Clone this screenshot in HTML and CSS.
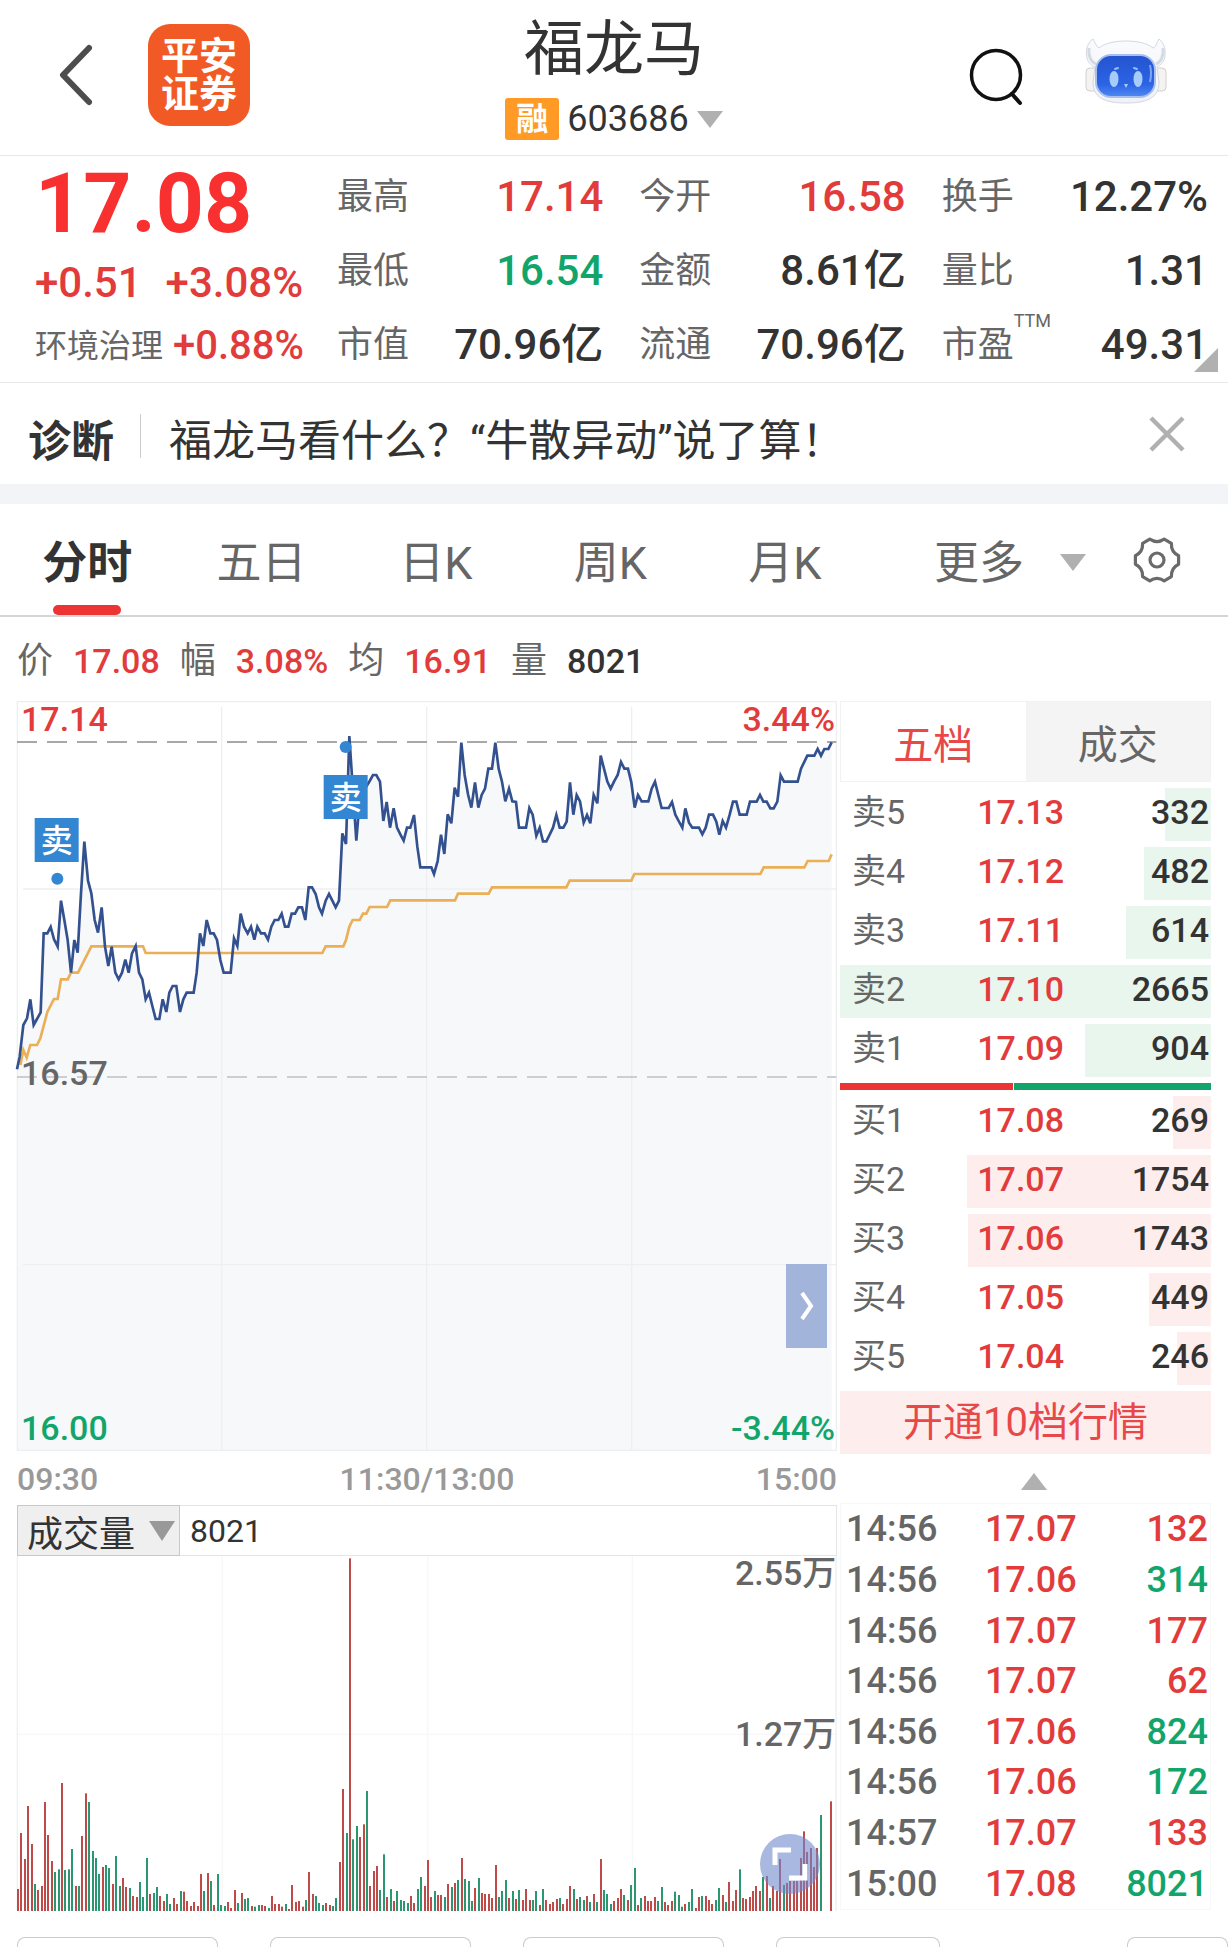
FILE: index.html
```html
<!DOCTYPE html>
<html lang="zh-CN">
<head>
<meta charset="UTF-8">
<meta name="viewport" content="width=device-width, initial-scale=1.0">
<title>福龙马 603686</title>
<link rel="stylesheet" href="styles.css">
</head>
<body>

<header class="topbar">
    <div class="topbar-side">
        <button class="icon-btn" aria-label="返回">
            <svg width="40" height="66" viewBox="0 0 40 66"><path d="M33 6 L7 33 L33 60" fill="none" stroke="#4d4d4d" stroke-width="6" stroke-linecap="round" stroke-linejoin="round"/></svg>
        </button>
        <div class="broker">平安<br>证券</div>
    </div>
    <div class="stock">
        <h1>福龙马</h1>
        <button class="stock-code"><span class="badge">融</span>603686<span class="caret"></span></button>
    </div>
    <div class="topbar-side right">
        <button class="icon-btn" aria-label="搜索">
            <svg width="54" height="58" viewBox="0 0 54 58"><circle cx="27" cy="27" r="24.5" fill="none" stroke="#111" stroke-width="3.5"/><path d="M43 46 L51 55" stroke="#111" stroke-width="4" stroke-linecap="round"/></svg>
        </button>
        <button class="icon-btn" aria-label="智能助手">
            <svg width="82" height="78" viewBox="0 0 82 78">
                <defs>
                    <linearGradient id="face" x1="0" y1="0" x2="0" y2="1">
                        <stop offset="0" stop-color="#2454cf"/>
                        <stop offset="0.7" stop-color="#2c63e6"/>
                        <stop offset="1" stop-color="#4f8af2"/>
                    </linearGradient>
                    <linearGradient id="shell" x1="0" y1="0" x2="0" y2="1">
                        <stop offset="0" stop-color="#fafbfd"/>
                        <stop offset="1" stop-color="#eef2f9"/>
                    </linearGradient>
                </defs>
                <rect x="1" y="30" width="12" height="23" rx="4" fill="#f5f2f2" stroke="#d5ced0"/>
                <rect x="69" y="30" width="12" height="23" rx="4" fill="#f5f2f2" stroke="#d5ced0"/>
                <path d="M8 1 C3 4 0 12 2 20 C3 25 7 28 10 29 L8 44 C8 60 20 65 41 65 C62 65 74 60 74 44 L72 29 C76 27 80 23 80 17 C81 10 78 4 74 1 C72 4 71 9 68 10 C62 5 52 3 41 3 C30 3 20 5 14 10 C11 8 10 4 8 1 Z" fill="url(#shell)" stroke="#d3d8e0"/>
                <path d="M4 10 C3 18 6 24 11 26 M78 10 C79 18 76 24 71 26" fill="none" stroke="#d3dae3" stroke-width="3"/>
                <rect x="11" y="17" width="59" height="42" rx="15" fill="url(#face)" stroke="#a9bfec" stroke-width="2"/>
                <ellipse cx="29" cy="41" rx="4.5" ry="8" fill="#a5cdf8"/>
                <ellipse cx="53" cy="41" rx="4.5" ry="8" fill="#a5cdf8"/>
                <path d="M30 31 L33 30 M49 30 L52 31" stroke="#8ec0f5" stroke-width="2" stroke-linecap="round"/>
                <path d="M39 46 L43 46 L41 50 Z" fill="#a5cdf8"/>
                <path d="M65 27 Q67 35 65 44" fill="none" stroke="#7fa6f4" stroke-width="2"/>
            </svg>
        </button>
    </div>
</header>

<section class="quote">
    <div class="quote-main">
        <div class="price">17.08</div>
        <div class="change"><span>+0.51</span><span>+3.08%</span></div>
        <div class="sector">环境治理 <b>+0.88%</b></div>
    </div>
    <dl class="stats">
        <div><dt>最高</dt><dd class="red">17.14</dd></div>
        <div><dt>今开</dt><dd class="red">16.58</dd></div>
        <div><dt>换手</dt><dd>12.27%</dd></div>
        <div><dt>最低</dt><dd class="green">16.54</dd></div>
        <div><dt>金额</dt><dd>8.61亿</dd></div>
        <div><dt>量比</dt><dd>1.31</dd></div>
        <div><dt>市值</dt><dd>70.96亿</dd></div>
        <div><dt>流通</dt><dd>70.96亿</dd></div>
        <div><dt>市盈<span class="ttm">TTM</span></dt><dd>49.31</dd></div>
    </dl>
</section>

<section class="diagnose">
    <strong>诊断</strong>
    <a href="#">福龙马看什么？“牛散异动”说了算！</a>
    <button class="icon-btn" aria-label="关闭">
        <svg width="40" height="40" viewBox="0 0 40 40"><path d="M4 4 L36 36 M36 4 L4 36" stroke="#b0b0b0" stroke-width="4.5"/></svg>
    </button>
</section>

<nav class="tabs">
    <button class="active">分时</button>
    <button>五日</button>
    <button>日K</button>
    <button>周K</button>
    <button>月K</button>
    <div class="tabs-more">
        <button>更多<span class="caret"></span></button>
        <button class="icon-btn" aria-label="设置">
            <svg width="48" height="48" viewBox="0 0 48 48" fill="none" stroke="#6a6a6a" stroke-width="3.2" stroke-linejoin="round">
                <path d="M45.6 28.2 Q37.9 32 38.4 40.6 L31.2 44.8 Q24 40 16.8 44.8 L9.6 40.6 Q10.1 32 2.4 28.2 L2.4 19.8 Q10.1 16 9.6 7.4 L16.8 3.2 Q24 8 31.2 3.2 L38.4 7.4 Q37.9 16 45.6 19.8 Z"/>
                <circle cx="24" cy="24" r="7"/>
            </svg>
        </button>
    </div>
</nav>

<div class="info">
    <span>价</span><b class="red">17.08</b>
    <span>幅</span><b class="red">3.08%</b>
    <span>均</span><b class="red">16.91</b>
    <span>量</span><b>8021</b>
</div>

<main class="board">
    <div class="charts">
        <div class="chart-box">
            <svg class="chart" viewBox="52 33 2460 2250">
                <polygon class="area" points="52,2283 52,1138 60,1100 71,1005 82,985 92,928 102,1005 112,987 123,967 132,730 143,730 153,711 163,748 174,770 184,632 194,690 204,750 214,848 224,750 234,788 244,610 254,455 265,572 275,610 285,690 295,728 306,652 316,770 326,828 336,770 347,848 357,868 367,848 377,809 387,848 397,790 408,768 418,848 428,868 438,928 448,908 458,948 468,987 479,987 489,928 500,966 509,908 519,888 530,888 541,966 551,928 561,908 582,908 591,848 601,730 611,768 621,690 632,730 642,730 652,750 662,810 672,848 693,848 703,745 713,768 723,671 733,710 744,730 754,710 764,749 773,710 784,730 795,730 805,749 815,710 825,690 836,690 846,671 856,710 866,710 876,671 886,671 896,652 907,652 917,690 927,592 937,592 948,612 958,652 967,671 978,632 988,612 998,632 1008,652 1018,632 1028,430 1039,462 1049,138 1059,290 1070,452 1080,330 1090,310 1100,290 1110,273 1120,255 1130,255 1141,275 1151,393 1161,336 1171,413 1182,355 1192,413 1202,433 1212,452 1222,413 1232,413 1243,375 1253,470 1262,532 1295,532 1303,552 1314,513 1324,434 1334,492 1344,373 1355,400 1365,293 1375,320 1385,158 1395,255 1405,313 1415,353 1426,277 1436,353 1446,315 1456,296 1466,236 1477,236 1487,158 1497,236 1507,275 1517,334 1528,296 1538,334 1549,336 1558,413 1579,413 1589,354 1599,374 1610,437 1620,413 1630,454 1640,454 1650,434 1660,413 1670,375 1680,413 1691,413 1701,395 1711,277 1721,374 1731,315 1741,334 1752,398 1762,375 1772,400 1782,315 1793,340 1803,197 1813,236 1823,275 1833,296 1843,275 1854,255 1864,216 1874,236 1885,236 1895,277 1905,353 1915,315 1926,334 1946,334 1956,296 1966,275 1976,315 1986,354 2007,354 2017,336 2027,374 2037,393 2048,413 2057,355 2068,398 2078,413 2098,413 2108,433 2118,413 2128,374 2140,374 2150,395 2159,434 2169,393 2179,413 2190,374 2200,335 2210,335 2220,374 2241,374 2251,335 2271,335 2281,315 2291,335 2301,335 2312,355 2322,355 2333,335 2343,256 2353,275 2394,275 2404,236 2423,197 2444,197 2454,177 2464,197 2474,177 2486,177 2496,157 2496,2283"/>
                <path class="grid" d="M666 50 V2283 M1281 50 V2283 M1896 50 V2283 M70 597 H2510 M70 1724 H2510"/>
                <rect class="frame" x="53" y="35" width="2457" height="2246"/>
                <path class="limit" d="M52 156 H2510"/>
                <path class="base" d="M52 1161 H2510"/>
                <polyline class="avg" points="62,1125 71,1080 81,1103 92,1065 112,1065 122,1045 143,966 163,927 174,927 184,868 204,868 214,848 235,848 275,769 430,769 438,789 968,789 978,769 1031,769 1039,750 1049,710 1059,690 1080,690 1090,671 1100,671 1110,651 1162,651 1172,631 1366,631 1375,611 1467,611 1477,592 1700,592 1710,572 1895,572 1904,552 2282,552 2292,532 2414,532 2424,513 2487,513 2496,493"/>
                <polyline class="line" points="52,1138 60,1100 71,1005 82,985 92,928 102,1005 112,987 123,967 132,730 143,730 153,711 163,748 174,770 184,632 194,690 204,750 214,848 224,750 234,788 244,610 254,455 265,572 275,610 285,690 295,728 306,652 316,770 326,828 336,770 347,848 357,868 367,848 377,809 387,848 397,790 408,768 418,848 428,868 438,928 448,908 458,948 468,987 479,987 489,928 500,966 509,908 519,888 530,888 541,966 551,928 561,908 582,908 591,848 601,730 611,768 621,690 632,730 642,730 652,750 662,810 672,848 693,848 703,745 713,768 723,671 733,710 744,730 754,710 764,749 773,710 784,730 795,730 805,749 815,710 825,690 836,690 846,671 856,710 866,710 876,671 886,671 896,652 907,652 917,690 927,592 937,592 948,612 958,652 967,671 978,632 988,612 998,632 1008,652 1018,632 1028,430 1039,462 1049,138 1059,290 1070,452 1080,330 1090,310 1100,290 1110,273 1120,255 1130,255 1141,275 1151,393 1161,336 1171,413 1182,355 1192,413 1202,433 1212,452 1222,413 1232,413 1243,375 1253,470 1262,532 1295,532 1303,552 1314,513 1324,434 1334,492 1344,373 1355,400 1365,293 1375,320 1385,158 1395,255 1405,313 1415,353 1426,277 1436,353 1446,315 1456,296 1466,236 1477,236 1487,158 1497,236 1507,275 1517,334 1528,296 1538,334 1549,336 1558,413 1579,413 1589,354 1599,374 1610,437 1620,413 1630,454 1640,454 1650,434 1660,413 1670,375 1680,413 1691,413 1701,395 1711,277 1721,374 1731,315 1741,334 1752,398 1762,375 1772,400 1782,315 1793,340 1803,197 1813,236 1823,275 1833,296 1843,275 1854,255 1864,216 1874,236 1885,236 1895,277 1905,353 1915,315 1926,334 1946,334 1956,296 1966,275 1976,315 1986,354 2007,354 2017,336 2027,374 2037,393 2048,413 2057,355 2068,398 2078,413 2098,413 2108,433 2118,413 2128,374 2140,374 2150,395 2159,434 2169,393 2179,413 2190,374 2200,335 2210,335 2220,374 2241,374 2251,335 2271,335 2281,315 2291,335 2301,335 2312,355 2322,355 2333,335 2343,256 2353,275 2394,275 2404,236 2423,197 2444,197 2454,177 2464,197 2474,177 2486,177 2496,157"/>
                <g class="mark">
                    <circle cx="173" cy="566" r="18"/>
                    <rect x="105" y="384" width="132" height="132"/>
                    <text x="171" y="486">卖</text>
                    <circle cx="1038" cy="171" r="18"/>
                    <rect x="972" y="255" width="132" height="132"/>
                    <text x="1038" y="357">卖</text>
                </g>
                <g class="scale">
                    <text class="red" x="64" y="123">17.14</text>
                    <text class="red end" x="2506" y="123">3.44%</text>
                    <text x="64" y="1186">16.57</text>
                    <text class="green" x="64" y="2251">16.00</text>
                    <text class="green end" x="2506" y="2251">-3.44%</text>
                </g>
            </svg>
            <button class="side-toggle" aria-label="展开">
                <svg width="16" height="30" viewBox="0 0 16 30"><path d="M3 2 L12 15 L3 28" fill="none" stroke="#fff" stroke-width="4"/></svg>
            </button>
        </div>
        <div class="times"><span>09:30</span><span>11:30/13:00</span><span>15:00</span></div>
        <div class="vol-head">
            <button>成交量<span class="caret"></span></button>
            <span>8021</span>
        </div>
        <div class="chart-box">
            <svg class="chart" viewBox="52 0 2460 1065">
                <path class="grid light" d="M668 0 V1065 M1284 0 V1065 M1898 0 V1065 M52 535 H2510"/>
                <path class="grid" d="M53 0 V1065 M2509 0 V1065"/>
                <g id="volume"></g>
                <g class="scale">
                    <text class="end" x="2510" y="87">2.55万</text>
                    <text class="end" x="2510" y="570">1.27万</text>
                </g>
            </svg>
            <button class="expand" aria-label="全屏">
                <svg width="36" height="34" viewBox="0 0 36 34"><path d="M3 18 V3 H19 M33 17 V31 H17" fill="none" stroke="#fff" stroke-width="5"/></svg>
            </button>
        </div>
    </div>

    <div class="side">
        <div class="side-tabs">
            <button class="active">五档</button>
            <button>成交</button>
        </div>
        <table class="book sell">
            <tr style="--w: 12.4%"><th>卖5</th><td>17.13</td><td>332</td></tr>
            <tr style="--w: 18%"><th>卖4</th><td>17.12</td><td>482</td></tr>
            <tr style="--w: 23%"><th>卖3</th><td>17.11</td><td>614</td></tr>
            <tr style="--w: 100%"><th>卖2</th><td>17.10</td><td>2665</td></tr>
            <tr style="--w: 33.9%"><th>卖1</th><td>17.09</td><td>904</td></tr>
        </table>
        <div class="ratio"><span style="width: 47%"></span></div>
        <table class="book buy">
            <tr style="--w: 10.1%"><th>买1</th><td>17.08</td><td>269</td></tr>
            <tr style="--w: 65.8%"><th>买2</th><td>17.07</td><td>1754</td></tr>
            <tr style="--w: 65.4%"><th>买3</th><td>17.06</td><td>1743</td></tr>
            <tr style="--w: 16.8%"><th>买4</th><td>17.05</td><td>449</td></tr>
            <tr style="--w: 9.2%"><th>买5</th><td>17.04</td><td>246</td></tr>
        </table>
        <button class="level2">开通10档行情</button>
        <div class="fold"><span class="caret up"></span></div>
        <table class="ticks">
            <tr><th>14:56</th><td>17.07</td><td class="red">132</td></tr>
            <tr><th>14:56</th><td>17.06</td><td class="green">314</td></tr>
            <tr><th>14:56</th><td>17.07</td><td class="red">177</td></tr>
            <tr><th>14:56</th><td>17.07</td><td class="red">62</td></tr>
            <tr><th>14:56</th><td>17.06</td><td class="green">824</td></tr>
            <tr><th>14:56</th><td>17.06</td><td class="green">172</td></tr>
            <tr><th>14:57</th><td>17.07</td><td class="red">133</td></tr>
            <tr><th>15:00</th><td>17.08</td><td class="green">8021</td></tr>
        </table>
    </div>
</main>

<div class="chips">
    <span class="chip"></span>
    <span class="chip"></span>
    <span class="chip"></span>
    <span class="chip short"></span>
    <span class="chip last"></span>
</div>

<script src="script.js"></script>
</body>
</html>
```
FILE: styles.css
```css
* {
    box-sizing: border-box;
}

body {
    margin: 0;
    background: #fff;
    color: #333;
    font-family: Roboto, "Noto Sans CJK SC", sans-serif;
    overflow-x: hidden;
}

button {
    border: none;
    background: none;
    padding: 0;
    margin: 0;
    color: inherit;
    font: inherit;
    cursor: pointer;
}

svg {
    display: block;
}

.red {
    color: #e23b3b;
    fill: #e23b3b;
}

.green {
    color: #12a56b;
    fill: #12a56b;
}

.caret {
    display: inline-block;
    border: 13px solid transparent;
    border-top: 17px solid #b0b0b0;
    border-bottom: none;
}

.caret.up {
    border-top: none;
    border-bottom: 17px solid #b0b0b0;
}

/* header */
.topbar {
    display: grid;
    grid-template-columns: 1fr auto 1fr;
    height: 156px;
    border-bottom: 1px solid #e8e8e8;
}

.topbar-side {
    display: flex;
    align-items: center;
    gap: 52px;
    padding: 0 56px 6px;
}

.topbar-side.right {
    justify-content: flex-end;
    gap: 62px;
    padding: 0 61px 2px;
}

.broker {
    width: 102px;
    height: 102px;
    padding-top: 13px;
    border-radius: 22px;
    background: #f15a24;
    color: #fff;
    font-size: 38px;
    font-weight: bold;
    line-height: 38px;
    text-align: center;
}

.stock {
    text-align: center;
}

.stock h1 {
    margin: 0;
    padding-top: 6px;
    font-size: 60px;
    font-weight: normal;
    line-height: 88px;
}

.stock-code {
    display: flex;
    align-items: center;
    gap: 8px;
    font-size: 36px;
    line-height: 42px;
    padding-top: 4px;
}

.badge {
    width: 54px;
    border-radius: 3px;
    background: #ff9a27;
    color: #fff;
    font-size: 32px;
    font-weight: bold;
}

/* quote */
.quote {
    position: relative;
    display: flex;
    height: 227px;
    padding: 0 20px 0 35px;
    border-bottom: 1px solid #e8e8e8;
}

.quote::after {
    content: "";
    position: absolute;
    right: 10px;
    bottom: 10px;
    border-left: 24px solid transparent;
    border-bottom: 24px solid #b0b0b0;
}

.quote-main {
    width: 302px;
    flex: none;
    color: #e23b3b;
}

.price {
    padding-top: 4px;
    color: #f93030;
    font-size: 84px;
    font-weight: bold;
    line-height: 88px;
}

.change {
    display: flex;
    gap: 24px;
    font-size: 42px;
    font-weight: 500;
    line-height: 70px;
}

.sector {
    display: flex;
    gap: 10px;
    color: #666;
    font-size: 32px;
    line-height: 56px;
    white-space: nowrap;
}

.sector b {
    color: #e23b3b;
    font-size: 40px;
    font-weight: 500;
}

.stats {
    flex: 1;
    display: grid;
    grid-template-columns: repeat(3, 1fr);
    grid-auto-rows: 74px;
    column-gap: 36px;
    margin: 0;
    padding-top: 4px;
}

.stats div {
    display: flex;
    justify-content: space-between;
    align-items: center;
}

.stats dt {
    position: relative;
    color: #666;
    font-size: 36px;
    line-height: 44px;
}

.stats dd {
    margin: 0;
    font-size: 42px;
    font-weight: 500;
    line-height: 50px;
}

.ttm {
    position: absolute;
    left: 100%;
    top: -12px;
    font-size: 18px;
    line-height: 20px;
}

/* diagnose bar */
.diagnose {
    display: flex;
    align-items: center;
    height: 101px;
    padding: 0 41px 0 28px;
    font-size: 43px;
    line-height: 56px;
}

.diagnose strong {
    height: 44px;
    margin-top: 4px;
    padding-right: 26px;
    border-right: 1px solid #ccc;
}

.diagnose a {
    flex: 1;
    padding: 14px 0 0 28px;
    color: inherit;
    text-decoration: none;
}

/* period tabs */
.tabs {
    display: grid;
    grid-template-columns: repeat(5, 1fr) 356px;
    height: 133px;
    border-top: 20px solid #f3f4f8;
    border-bottom: 2px solid #d5d5d5;
    color: #666;
    font-size: 45px;
}

.tabs .active {
    position: relative;
    color: #333;
    font-weight: bold;
}

.tabs .active::after {
    content: "";
    position: absolute;
    left: 50%;
    bottom: 0;
    width: 68px;
    height: 10px;
    margin-left: -34px;
    border-radius: 5px;
    background: #ec3434;
}

.tabs-more {
    display: flex;
    justify-content: space-between;
    align-items: center;
    padding: 0 47px 0 62px;
}

.tabs-more .caret {
    margin-left: 36px;
    vertical-align: 8px;
}

.info {
    display: flex;
    align-items: center;
    gap: 20px;
    height: 84px;
    padding: 4px 17px 0;
    color: #666;
    font-size: 36px;
    line-height: 44px;
}

.info b {
    font-size: 34px;
    font-weight: 500;
}

.info b:not(.red) {
    color: #333;
}

/* charts */
.board {
    display: grid;
    grid-template-columns: 820fr 371fr;
    gap: 3px;
    align-items: start;
    padding: 0 17px;
}

.chart-box {
    position: relative;
}

.chart {
    width: 100%;
    overflow: visible;
}

.area {
    fill: #f6f8fa;
}

.grid,
.frame {
    fill: none;
    stroke: #eeeff1;
    stroke-width: 4;
}

.light {
    stroke: #f7f7f7;
}

.limit,
.base {
    stroke: #8c8c8c;
    stroke-width: 5;
    stroke-dasharray: 60 30;
}

.base {
    stroke: #c0c0c0;
}

.line,
.avg {
    fill: none;
    stroke: #34518f;
    stroke-width: 8;
}

.avg {
    stroke: #eaaf57;
}

.mark {
    fill: #3387d2;
}

.mark text {
    fill: #fff;
    font-size: 96px;
    font-weight: 500;
    text-anchor: middle;
}

.scale {
    fill: #666;
    font-size: 102px;
    font-weight: 500;
}

.end {
    text-anchor: end;
}

.side-toggle {
    position: absolute;
    top: 75%;
    right: 10px;
    display: flex;
    align-items: center;
    justify-content: center;
    width: 41px;
    height: 84px;
    background: #a3b4da;
}

.expand {
    position: absolute;
    right: 17px;
    bottom: 17px;
    display: flex;
    align-items: center;
    justify-content: center;
    width: 60px;
    height: 60px;
    border-radius: 50%;
    background: rgba(112, 136, 204, 0.6);
}

.times {
    display: flex;
    justify-content: space-between;
    padding-top: 2px;
    color: #999;
    font-size: 32px;
    font-weight: 500;
    line-height: 52px;
}

.vol-head {
    display: flex;
    align-items: center;
    gap: 10px;
    height: 51px;
    border: 1px solid #e5e5e5;
    border-left: none;
    font-size: 32px;
}

.vol-head button {
    display: flex;
    align-items: center;
    gap: 14px;
    height: 51px;
    padding: 0 4px 0 9px;
    border: 1px solid #c8c8c8;
    background: #efefef;
    font-size: 36px;
}

.vol-head .caret {
    border-top: 20px solid #999;
}

.vol-up {
    fill: #bf4a4a;
}

.vol-down {
    fill: #2a9770;
}

/* order book */
.side-tabs {
    display: flex;
    height: 81px;
    border: 1px solid #f2f2f2;
    color: #666;
    font-size: 40px;
}

.side-tabs button {
    flex: 1;
    background: #f4f4f4;
}

.side-tabs .active {
    background: #fff;
    color: #e84848;
}

table {
    width: 100%;
    table-layout: fixed;
    font-weight: 500;
    color: #333;
}

th {
    padding: 0;
    color: #666;
    text-align: left;
}

td {
    padding: 0;
}

td:nth-child(2) {
    color: #e23b3b;
}

td:last-child {
    padding-right: 2px;
    text-align: right;
}

.book {
    border-spacing: 0 6px;
    font-size: 34px;
    line-height: 49px;
}

.book th {
    width: 37%;
    padding-left: 12px;
    font-weight: normal;
}

.book th,
.book td {
    padding-bottom: 4px;
}

.sell tr {
    background: linear-gradient(to left, #e9f6ee var(--w), transparent 0);
}

.buy tr {
    background: linear-gradient(to left, #fdeeed var(--w), transparent 0);
}

.ratio {
    display: flex;
    height: 7px;
    background: #12a56b;
}

.ratio span {
    border-right: 1px solid #fff;
    background: #ec3434;
}

.level2 {
    display: block;
    width: 100%;
    height: 63px;
    background: #fdeeed;
    color: #e84848;
    font-size: 40px;
    line-height: 63px;
}

.fold {
    display: flex;
    justify-content: center;
    align-items: flex-start;
    height: 49px;
    padding-top: 19px;
    margin-right: -17px;
}

.ticks {
    height: 407px;
    border: 1px solid #f7f7f7;
    border-spacing: 0;
    font-size: 36px;
    line-height: 50px;
}

.ticks th {
    width: 39%;
    padding-left: 5px;
    font-weight: 500;
}

/* bottom row */
.chips {
    display: flex;
    gap: 52px;
    padding-left: 17px;
    margin-top: 26px;
}

.chip {
    width: 201px;
    height: 11px;
    border: 1px solid #ccc;
    border-bottom: none;
    border-radius: 8px 8px 0 0;
}

.chip.short {
    width: 164px;
}

.chip.last {
    width: 101px;
    margin-left: auto;
}
```
FILE: script.js
```js
// one bar per minute, "r" = up, "g" = down
var bars = "r63 r224 r149 r301 r192 g77 r60 r72 r313 r218 r143 g112 g120 r367 g118 g120 g178 r72 g72 r215 " +
    "r338 g313 g172 g152 g106 r126 g132 g123 r77 g158 g72 r95 r69 g66 r43 r40 g83 g40 g152 r49 " +
    "g52 g69 r43 r29 g49 g20 r37 r20 g57 r55 r29 r14 r26 r14 r106 g57 r109 g86 r17 g106 " +
    "g17 g14 r26 r9 r60 g23 r52 g34 g37 r14 g12 g17 r17 r14 g9 r43 r20 r20 r12 g20 " +
    "r6 r75 r26 r29 r12 g32 r112 r49 g43 g23 g17 r23 r17 g14 g37 r141 r350 g224 r1012 g206 " +
    "g244 r212 r249 g344 r72 r115 r129 g60 g163 r40 g63 r29 g57 g32 g29 g23 r43 r23 g63 " +
    "g98 r72 r146 r40 g57 r46 r46 g40 r77 g69 r80 g89 r152 g92 g86 g29 r66 g95 r52 r49 " +
    "r49 r37 r132 g40 g57 g89 r37 g57 r34 g60 r32 r63 r32 g32 g57 r17 g63 r32 r20 r26 " +
    "r34 g37 r20 r34 r72 g63 r34 g40 g32 r43 g26 r49 g26 r149 g60 g49 g20 r29 r37 r63 " +
    "g46 r32 g75 g123 r17 g37 r43 r29 r29 r40 g29 g69 r26 r17 r29 g55 g46 g12 r20 g26 " +
    "g63 r9 r40 g43 r43 r32 r20 g32 g66 r46 g26 r83 r29 r60 g120 r37 r34 r40 r57 r72 " +
    "r57 g98 r100 g37 r72 r57 r149 g75 r80 r86 r86 r86 r152 r229 r169 r181 r126 r181 g275 r0 r0 r315";

var list = bars.split(" ");
var step = 2439 / (list.length - 1);
var bottom = 1065;
var scale = 1058 / 1012; // tallest bar stops just below the top edge
var volume = document.getElementById("volume");

for (var i = 0; i < list.length; i++) {
    var height = Math.round(parseInt(list[i].slice(1), 10) * scale);
    var rect = document.createElementNS("http://www.w3.org/2000/svg", "rect");
    rect.setAttribute("x", 52 + Math.round(i * step / 3) * 3);
    rect.setAttribute("y", bottom - height);
    rect.setAttribute("width", 6);
    rect.setAttribute("height", height);
    rect.setAttribute("class", list[i][0] === "r" ? "vol-up" : "vol-down");
    volume.appendChild(rect);
}
```
